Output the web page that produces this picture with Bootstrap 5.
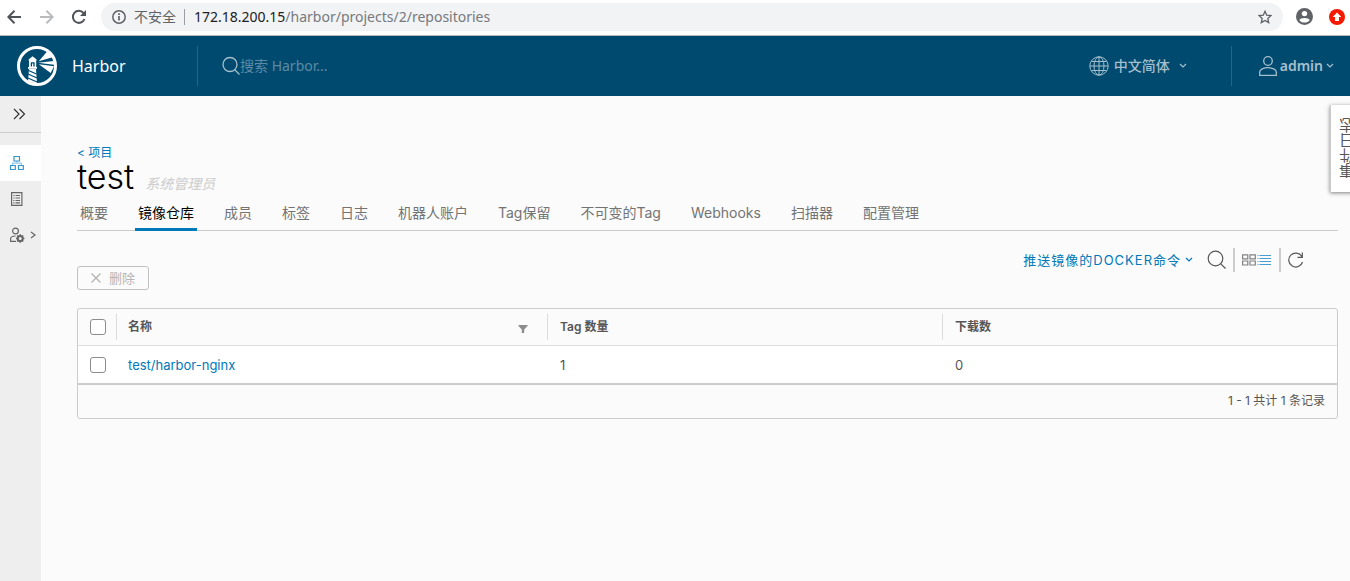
<!DOCTYPE html>
<html lang="zh-CN">
<head>
<meta charset="utf-8">
<meta name="viewport" content="width=device-width, initial-scale=1">
<title>Harbor</title>
<link rel="stylesheet" href="https://cdn.jsdelivr.net/npm/bootstrap@5.3.0/dist/css/bootstrap.min.css">
<style>
  body { font-family: "Noto Sans", "Noto Sans CJK SC", sans-serif; font-size: 14px; line-height: 20px; color: #565656; background: #fbfbfb; overflow-x: hidden; }
  a { text-decoration: none; color: #0079b8; }
  svg { display: block; flex: none; }
  .plain-btn { background: none; border: 0; padding: 0; color: inherit; display: flex; align-items: center; }

  .browser-bar { height: 36px; background: #fff; border-bottom: 1px solid #b6b6b8; padding: 0 5px 2px 7px; color: #5f6368; }
  .address { height: 28px; border-radius: 14px; background: #f1f3f4; padding: 0 11px; margin: 0 13px 0 14px; }
  .url-text { color: #77797d; white-space: nowrap; }
  .url-text b { font-weight: 400; color: #202124; }
  .url-sep { width: 1px; height: 16px; background: #9a9da1; margin: 0 9px 0 8px; }

  .app-header { height: 60px; background: #004a70; color: #a5bfcd; }
  .brand { width: 197px; padding-left: 16px; gap: 14px; color: #fff; font-size: 16px; }
  .header-rule { width: 1px; height: 40px; background: #24648a; }
  .search-box { background: none; border: 0; color: #fff; outline: 0; padding: 0; width: 200px; }
  .search-box::placeholder { color: #5d8ba4; opacity: 1; }
  .header-menu { font-weight: 500; }
  .lang { margin-right: 44px; gap: 5px; }
  .user { margin: 0 16px 0 27px; gap: 3px; }
  .user span { font-weight: 600; }

  .side-nav { width: 41px; background: #eee; }
  .side-nav .toggle { width: 100%; height: 37px; padding-left: 13px; border-bottom: 1px solid #ccc; color: #333; margin-bottom: 12px; }
  .side-nav a { height: 36px; padding-left: 9px; color: #666; }
  .side-nav a.active { background: #fff; color: #3496cc; }

  .content { padding: 47px 12px 24px 36px; font-family: Inter, "Noto Sans CJK SC", sans-serif; }
  .back { font-size: 12px; line-height: 20px; }
  .project-name { font-size: 34px; line-height: 28px; font-weight: 300; color: #000; margin: 0; }
  .role { color: #ccc; font-style: italic; line-height: 20px; margin-left: 11px; }
  .tabs { gap: 24px; height: 36px; border-bottom: 1px solid #ccc; margin-top: 1px; }
  .tabs a { color: #737373; padding: 8px 3px 0; height: 36px; white-space: nowrap; }
  .tabs a.active { color: #000; box-shadow: inset 0 -3px 0 #0079b8; }

  .toolbar-row { margin-top: 13px; height: 64px; }
  .delete-btn { width: 72px; height: 24px; margin-top: 22px; border: 1px solid #c1c1c1; border-radius: 3px; background: none; color: #b5b5b5; font-size: 13px; padding: 0; }
  .tools { margin-right: 34px; height: 32px; }
  .push-cmd { font-size: 13px; letter-spacing: 1px; color: #0079b8; margin-right: 14px; }
  .tool-rule { width: 2px; height: 24px; background: #ccc; margin: 0 7px; }

  .grid-box { border: 1px solid #ccc; border-radius: 3px; font-size: 12px; overflow: hidden; }
  .repos { width: 100%; table-layout: fixed; border-collapse: separate; border-spacing: 0; }
  .repos th { padding: 0; height: 37px; border-bottom: 1px solid #ddd; font-weight: 600; }
  .repos td { height: 37px; padding: 0 0 0 13px; background: #fff; font-size: 13px; }
  .repos .check-cell { width: 38px; padding: 0 0 0 12px; }
  .th-inner { border-left: 1px solid #ddd; height: 26px; padding-left: 12px; }
  .name-cell { width: 431px; }
  .repos td.name-cell { padding-left: 12px; }
  .name-cell .th-inner { padding: 0 18px 0 11px; }
  .pick { display: block; width: 16px; height: 16px; margin: 0; border: 1px solid #8c8c8c; }
  .form-check-input.pick[type=checkbox] { border-radius: 3px; }
  .grid-foot { border-top: 2px solid #ccc; height: 35px; padding: 0 12px 2px 0; }

  .stage { position: relative; overflow: hidden; }
  .event-log { position: absolute; top: 9px; right: -12px; width: 32px; height: 87px; background: #fff; border: 0; border-left: 1px solid #ccc; box-shadow: 0 1px 4px rgba(0,0,0,.5); padding: 3px 0 0; font-size: 15px; color: #565656; }
  .event-log span { writing-mode: vertical-rl; transform: rotate(180deg); line-height: 18px; }
</style>
</head>
<body class="d-flex flex-column min-vh-100">

<div class="browser-bar d-flex align-items-center">
  <button class="plain-btn" aria-label="后退"><svg width="16" height="16" viewBox="0 0 16 16" fill="none" stroke="#505357" stroke-width="2"><path d="M14 8H2M7.500 1.800L1.400 8l6.100 6.200"/></svg></button>
  <button class="plain-btn ms-3" aria-label="前进"><svg width="16" height="16" viewBox="0 0 16 16" fill="none" stroke="#b9bbbd" stroke-width="2"><path d="M1 8h12M7.500 1.800L13.600 8l-6.100 6.200"/></svg></button>
  <button class="plain-btn ms-3" aria-label="重新加载"><svg width="16" height="16" viewBox="0 0 16 16" fill="none" stroke="#505357" stroke-width="2"><path d="M13.500 10A6 6 0 1 1 12.500 4L14 5.600"/><path d="M15 1v6H9z" fill="#505357" stroke="none"/></svg></button>
  <div class="address d-flex align-items-center flex-grow-1">
    <svg width="14" height="14" viewBox="0 0 14 14" fill="none" stroke="#5f6368" stroke-width="1.500"><circle cx="7" cy="7" r="6.200"/><path d="M7 6v4.500M7 3.300v1.600" stroke-width="1.700"/></svg>
    <span class="ms-2">不安全</span>
    <span class="url-sep"></span>
    <span class="url-text"><b>172.18.200.15</b>/harbor/projects/2/repositories</span>
    <button class="plain-btn ms-auto" aria-label="收藏"><svg width="14" height="14" viewBox="0 0 14 14" fill="none" stroke="#5f6368" stroke-width="1.300"><path d="M7 1.300l1.700 3.900 4.300.4-3.200 2.800.9 4.200L7 10.400l-3.700 2.200.9-4.200L1 5.600l4.300-.4z"/></svg></button>
  </div>
  <button class="plain-btn" aria-label="用户"><svg width="17" height="17" viewBox="0 0 17 17"><circle cx="8.500" cy="8.500" r="8.500" fill="#5f6368"/><circle cx="8.500" cy="5.600" r="2.700" fill="#fff"/><path d="M3.300 12.200c.9-3 9.500-3 10.400 0-2.300 3.200-8.100 3.200-10.400 0z" fill="#fff"/></svg></button>
  <button class="plain-btn ms-3" aria-label="更新"><svg width="16" height="16" viewBox="0 0 16 16"><circle cx="8" cy="8" r="8" fill="#f51900"/><path d="M8 3.600L12.300 8H10v4H6V8H3.700z" fill="#fff"/></svg></button>
</div>

<header class="app-header d-flex align-items-center">
  <a href="#" class="brand d-flex align-items-center">
    <svg width="42" height="42" viewBox="0 0 42 42"><g fill="#fff"><path d="M16.600 11.300l4 3.200v1h-8v-1zM13 15h7.200v7.500H13zM12 22h9v1.700h-9z"/><path d="M13 24h7l1 15-9-2.500z"/><path d="M22.800 16.200L31.500 6l5 6.200zM22 17.700l16-1.600v3.700zM22.800 19.300l15.200 2-3.300 6.700z"/></g>
      <path d="M15.400 21.500v-3.700h2.600v3.700M12.500 25.500l8 3.500M12 29l9 4M12 33l9 4" fill="none" stroke="#004a70" stroke-width="1.300"/><circle cx="21" cy="21" r="18.500" fill="none" stroke="#fff" stroke-width="3"/></svg>
    <span>Harbor</span>
  </a>
  <span class="header-rule"></span>
  <form class="d-flex align-items-center ms-4 mb-0" role="search">
    <label for="q" aria-label="搜索"><svg width="18" height="20" viewBox="0 0 18 20" fill="none" stroke="#a5bfcd" stroke-width="1.300"><circle cx="8" cy="8.500" r="7"/><path d="M13 14l4.500 4.500"/></svg></label>
    <input id="q" class="search-box" placeholder="搜索 Harbor...">
  </form>
  <button class="plain-btn lang header-menu ms-auto">
    <svg width="20" height="20" viewBox="0 0 20 20" fill="none" stroke="#a5bfcd" stroke-width="1"><circle cx="10" cy="10" r="9.200"/><ellipse cx="10" cy="10" rx="5" ry="9.200"/><path d="M10 1v18M1 10h18M2.500 5.500h15M2.500 14.500h15"/></svg>
    <span>中文简体</span>
    <svg class="ms-1" width="8" height="6" viewBox="0 0 8 6" fill="none" stroke="#a5bfcd" stroke-width="1.200"><path d="M1 1l3 3 3-3"/></svg>
  </button>
  <span class="header-rule"></span>
  <button class="plain-btn header-menu user">
    <svg width="18" height="20" viewBox="0 0 18 20" fill="none" stroke="#a5bfcd" stroke-width="1.300"><circle cx="9" cy="5" r="4.300"/><path d="M.7 19.300V16c0-2.500 4-4.300 8.300-4.300s8.300 1.800 8.300 4.300v3.300z"/></svg>
    <span>admin</span>
    <svg width="8" height="6" viewBox="0 0 8 6" fill="none" stroke="#a5bfcd" stroke-width="1.200"><path d="M1 1l3 3 3-3"/></svg>
  </button>
</header>

<div class="stage d-flex flex-grow-1">
  <nav class="side-nav flex-shrink-0" aria-label="主导航">
    <button class="plain-btn toggle" aria-label="展开"><svg width="13" height="12" viewBox="0 0 13 12" fill="none" stroke="#333" stroke-width="1.200"><path d="M1 1l5 5-5 5M6.500 1l5 5-5 5"/></svg></button>
    <a href="#" class="active d-flex align-items-center" aria-label="项目"><svg width="16" height="16" viewBox="0 0 16 16" fill="none" stroke="currentColor" stroke-width="1.200"><path d="M5 1.500h5.500V6H5zM1.500 10.500h4.800v4H1.500zM9.500 10.500h4.800v4H9.500z"/><path d="M7.800 6v2M3.500 10.500V8.200h8.800v2.300" opacity=".5"/></svg></a>
    <a href="#" class="d-flex align-items-center" aria-label="日志"><svg width="16" height="16" viewBox="0 0 16 16" fill="none" stroke="currentColor" stroke-width="1.200"><path d="M2.600 1.600h10.300v12.800H2.600z"/><path d="M6.500 4.500h4.500M6.500 7h4.500M6.500 9.500h4.500M6.500 11.800h4.500M4.300 4.500h1.200M4.300 7h1.200M4.300 9.500h1.200M4.300 11.800h1.200"/></svg></a>
    <a href="#" class="d-flex align-items-center" aria-label="系统管理"><svg width="16" height="16" viewBox="0 0 16 16" fill="none" stroke="currentColor" stroke-width="1.200"><circle cx="6.500" cy="4" r="2.900"/><path d="M7 14.400H1.600v-2.600c0-1.800 2-2.700 5-2.800"/><circle cx="11.200" cy="11.500" r="2.500" stroke-width="2"/><path d="M11.200 7.300v1.400M11.200 14.300v1.400M7 11.500h1.400M14 11.500h1.400M8.200 8.500l1 1M13.200 13.500l1 1M8.200 14.500l1-1M13.200 9.500l1-1" stroke-width="1.600"/></svg>
      <svg class="ms-1" width="8" height="8" viewBox="0 0 8 8" fill="none" stroke="#666" stroke-width="1.200"><path d="M2 1l4 3-4 3"/></svg></a>
  </nav>

  <main class="content flex-grow-1">
    <a href="#" class="back d-block">&lt; 项目</a>
    <div class="d-flex align-items-baseline">
      <h1 class="project-name">test</h1>
      <span class="role">系统管理员</span>
    </div>
    <nav class="tabs d-flex">
      <a href="#">概要</a><a href="#" class="active" aria-current="page">镜像仓库</a><a href="#">成员</a><a href="#">标签</a><a href="#">日志</a><a href="#">机器人账户</a><a href="#">Tag保留</a><a href="#">不可变的Tag</a><a href="#">Webhooks</a><a href="#">扫描器</a><a href="#">配置管理</a>
    </nav>

    <div class="toolbar-row d-flex justify-content-between align-items-start">
      <button class="delete-btn d-flex align-items-center justify-content-center gap-2" disabled>
        <svg width="10" height="10" viewBox="0 0 10 10" stroke="#b0b0b0" stroke-width="1.200"><path d="M.5.5l9 9M9.500.5l-9 9"/></svg>删除</button>
      <div class="tools d-flex align-items-center">
        <button class="plain-btn push-cmd">推送镜像的DOCKER命令<svg class="ms-1" width="8" height="6" viewBox="0 0 8 6" fill="none" stroke="#0079b8" stroke-width="1.200"><path d="M1 1l3 3 3-3"/></svg></button>
        <button class="plain-btn" aria-label="搜索"><svg width="19" height="20" viewBox="0 0 19 20" fill="none" stroke="#565656" stroke-width="1.200"><circle cx="8.500" cy="8.500" r="7.300"/><path d="M13.800 13.800l4.700 4.700"/></svg></button>
        <span class="tool-rule"></span>
        <button class="plain-btn" aria-label="卡片视图"><svg width="14" height="12" viewBox="0 0 14 12" fill="none" stroke="#828282" stroke-width="1.200"><path d="M.6.900h5.200v4H.6zM8 .900h5.300v4H8zM.6 7h5.200v4H.6zM8 7h5.300v4H8z"/></svg></button>
        <button class="plain-btn" aria-label="列表视图"><svg width="16" height="12" viewBox="0 0 16 12" stroke="#49a0ce" stroke-width="1"><path d="M1.500 1.500h1M3.500 1.500H15M1.500 4.500h1M3.500 4.500H15M1.500 7.500h1M3.500 7.500H15M1.500 10.500h1M3.500 10.500H15"/></svg></button>
        <span class="tool-rule"></span>
        <button class="plain-btn" aria-label="刷新"><svg width="16" height="18" viewBox="0 0 16 18" fill="none" stroke="#565656" stroke-width="1.200"><path d="M14.500 11A7 7 0 1 1 13.800 5.500M14.300 1.500v4.800H9.500"/></svg></button>
      </div>
    </div>

    <div class="grid-box">
      <table class="repos">
        <thead><tr>
          <th class="check-cell"><input type="checkbox" class="form-check-input pick" aria-label="全选"></th>
          <th class="name-cell"><div class="th-inner d-flex align-items-center justify-content-between">名称<button class="plain-btn pt-1" aria-label="筛选"><svg width="12" height="10" viewBox="0 0 12 10" fill="#8c8c8c"><path d="M1.500 1h9v1L7.200 5.500V9H4.800V5.500L1.500 2z"/></svg></button></div></th>
          <th><div class="th-inner d-flex align-items-center">Tag 数量</div></th>
          <th><div class="th-inner d-flex align-items-center">下载数</div></th>
        </tr></thead>
        <tbody><tr>
          <td class="check-cell"><input type="checkbox" class="form-check-input pick" aria-label="选择 test/harbor-nginx"></td>
          <td class="name-cell"><a href="#">test/harbor-nginx</a></td>
          <td>1</td>
          <td>0</td>
        </tr></tbody>
      </table>
      <div class="grid-foot d-flex align-items-center justify-content-end">1 - 1 共计 1 条记录</div>
    </div>
  </main>

  <button class="event-log"><span>事件日志</span></button>
</div>
<script src="https://cdn.jsdelivr.net/npm/bootstrap@5.3.0/dist/js/bootstrap.bundle.min.js"></script>
</body>
</html>
